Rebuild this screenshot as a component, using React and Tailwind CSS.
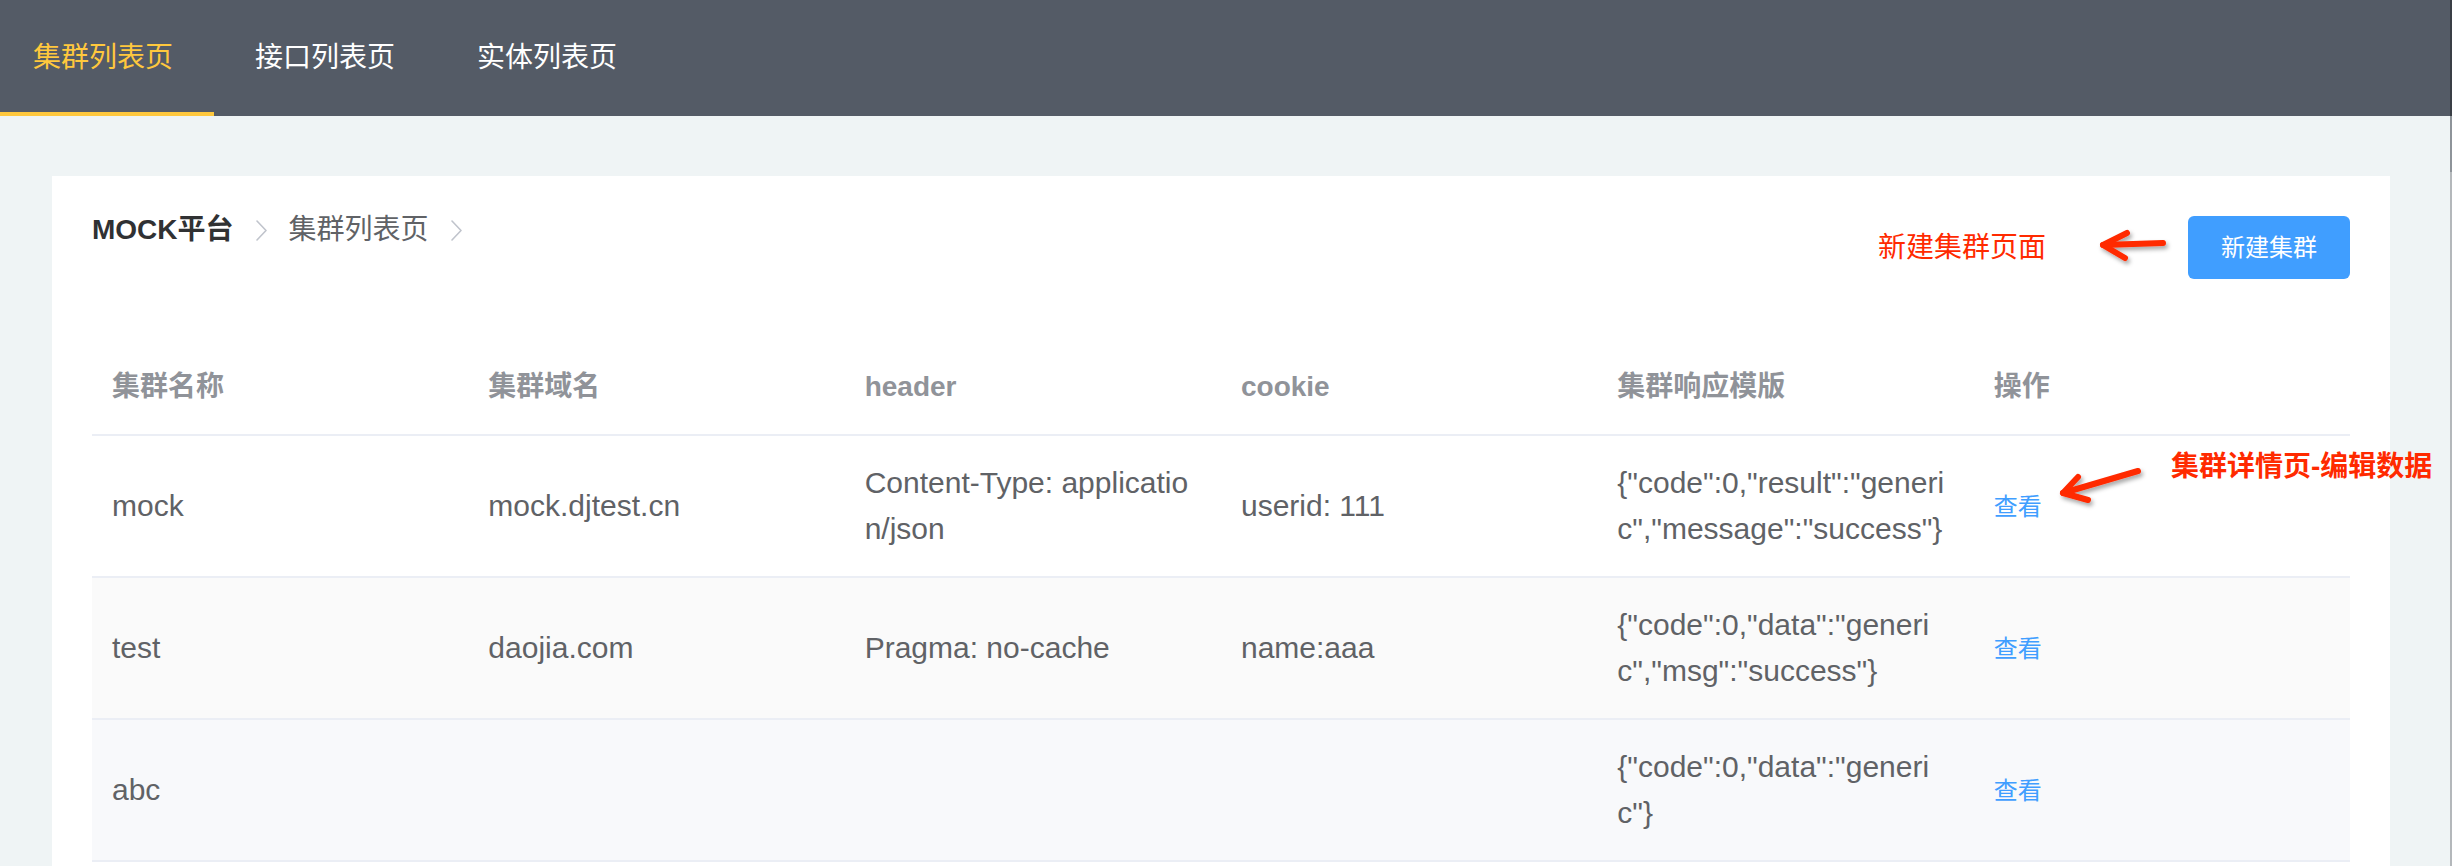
import React from "react";

const rows = [
  {
    name: "mock",
    domain: "mock.djtest.cn",
    header: ["Content-Type: applicatio", "n/json"],
    cookie: "userid: 111",
    tpl: ['{"code":0,"result":"generi', 'c","message":"success"}'],
    bg: "bg-white",
  },
  {
    name: "test",
    domain: "daojia.com",
    header: ["Pragma: no-cache"],
    cookie: "name:aaa",
    tpl: ['{"code":0,"data":"generi', 'c","msg":"success"}'],
    bg: "bg-[#fafafa]",
  },
  {
    name: "abc",
    domain: "",
    header: [],
    cookie: "",
    tpl: ['{"code":0,"data":"generi', 'c"}'],
    bg: "bg-[#f8f9fb]",
  },
];

function Chevron() {
  return (
    <svg width="13" height="21" viewBox="0 0 13 21" className="block">
      <polyline points="2,1 11,10.5 2,20" fill="none" stroke="#c0c4cc" strokeWidth="1.6" strokeLinejoin="round" strokeLinecap="round" />
    </svg>
  );
}

function Lines({ lines }) {
  return (
    <>
      {lines.map((l, i) => (
        <span key={i} className="block whitespace-nowrap">
          {l}
        </span>
      ))}
    </>
  );
}

export default function App() {
  const th = "px-[20px] py-[24px] leading-[46px] text-left align-middle text-[28px] font-bold text-[#909399]";
  const td = "px-[20px] py-[24px] leading-[46px] align-middle text-[30px] text-[#606266]";
  return (
    <div className="relative min-h-screen overflow-hidden bg-[#eff4f5] font-['Liberation_Sans','Noto_Sans_CJK_SC',sans-serif]">
      <nav className="flex h-[116px] bg-[#545b66]">
        <div className="relative flex w-[214px] items-center pl-[33px] text-[28px] text-[#ffc83d]">
          集群列表页
          <div className="absolute bottom-0 left-0 h-[4px] w-full bg-[#ffc83d]" />
        </div>
        <div className="flex items-center px-[41px] text-[28px] text-white">接口列表页</div>
        <div className="flex items-center px-[41px] text-[28px] text-white">实体列表页</div>
      </nav>

      <main className="pl-[52px] pr-[62px] pt-[60px]">
        <div className="bg-white px-[40px] pb-[40px] pt-[40px]">
          <div className="flex items-start justify-between">
            <div className="flex h-[28px] items-center text-[28px] leading-[28px]">
              <span className="font-bold text-[#303133]">MOCK平台</span>
              <span className="mx-[21px]">
                <Chevron />
              </span>
              <span className="text-[#606266]">集群列表页</span>
              <span className="ml-[21px]">
                <Chevron />
              </span>
            </div>
            <button className="h-[63px] w-[162px] rounded-[6px] bg-[#409eff] text-[24px] text-white">
              新建集群
            </button>
          </div>

          <table className="mt-[61px] w-full table-fixed border-collapse">
            <thead>
              <tr className="border-b-2 border-[#ebeef5]">
                <th className={th}>集群名称</th>
                <th className={th}>集群域名</th>
                <th className={th}>header</th>
                <th className={th}>cookie</th>
                <th className={th}>集群响应模版</th>
                <th className={th}>操作</th>
              </tr>
            </thead>
            <tbody>
              {rows.map((r) => (
                <tr key={r.name} className={`border-b-2 border-[#ebeef5] ${r.bg}`}>
                  <td className={td}>{r.name}</td>
                  <td className={td}>{r.domain}</td>
                  <td className={td}>
                    <Lines lines={r.header} />
                  </td>
                  <td className={td}>{r.cookie}</td>
                  <td className={td}>
                    <Lines lines={r.tpl} />
                  </td>
                  <td className={td}>
                    <span className="text-[24px] text-[#409eff]">查看</span>
                  </td>
                </tr>
              ))}
            </tbody>
          </table>
        </div>
      </main>

      {/* annotations */}
      <div className="absolute left-[1878px] top-[234px] text-[28px] leading-[28px] text-[#ff2a00]">新建集群页面</div>
      <svg className="absolute left-[2090px] top-[220px]" width="85" height="50" viewBox="0 0 85 50">
        <defs>
          <filter id="sh1" x="-20%" y="-20%" width="150%" height="160%">
            <feDropShadow dx="2" dy="3" stdDeviation="2" floodColor="#000" floodOpacity="0.35" />
          </filter>
        </defs>
        <g filter="url(#sh1)" fill="none" stroke="#ff2a00" strokeWidth="6" strokeLinecap="round" strokeLinejoin="round">
          <path d="M73 23 L13 25" />
          <path d="M37 13 L13 25 L35 38" />
        </g>
      </svg>

      <div className="absolute left-[2171px] top-[453px] text-[28px] font-bold leading-[28px] text-[#ff2a00]">集群详情页-编辑数据</div>
      <svg className="absolute left-[2050px] top-[455px]" width="105" height="60" viewBox="0 0 105 60">
        <defs>
          <filter id="sh2" x="-20%" y="-20%" width="150%" height="160%">
            <feDropShadow dx="2" dy="3" stdDeviation="2" floodColor="#000" floodOpacity="0.35" />
          </filter>
        </defs>
        <g filter="url(#sh2)" fill="none" stroke="#ff2a00" strokeWidth="6" strokeLinecap="round" strokeLinejoin="round">
          <path d="M88 16 L13 38" />
          <path d="M28 22 L13 38 L38 45" />
        </g>
      </svg>

      <div className="absolute right-0 top-0 flex h-full w-[2px] flex-col">
        <div className="h-[116px] bg-[#3a3f46]" />
        <div className="h-[56px] bg-[#8e9499]" />
        <div className="flex-1 bg-[#b4b8bb]" />
      </div>
    </div>
  );
}
